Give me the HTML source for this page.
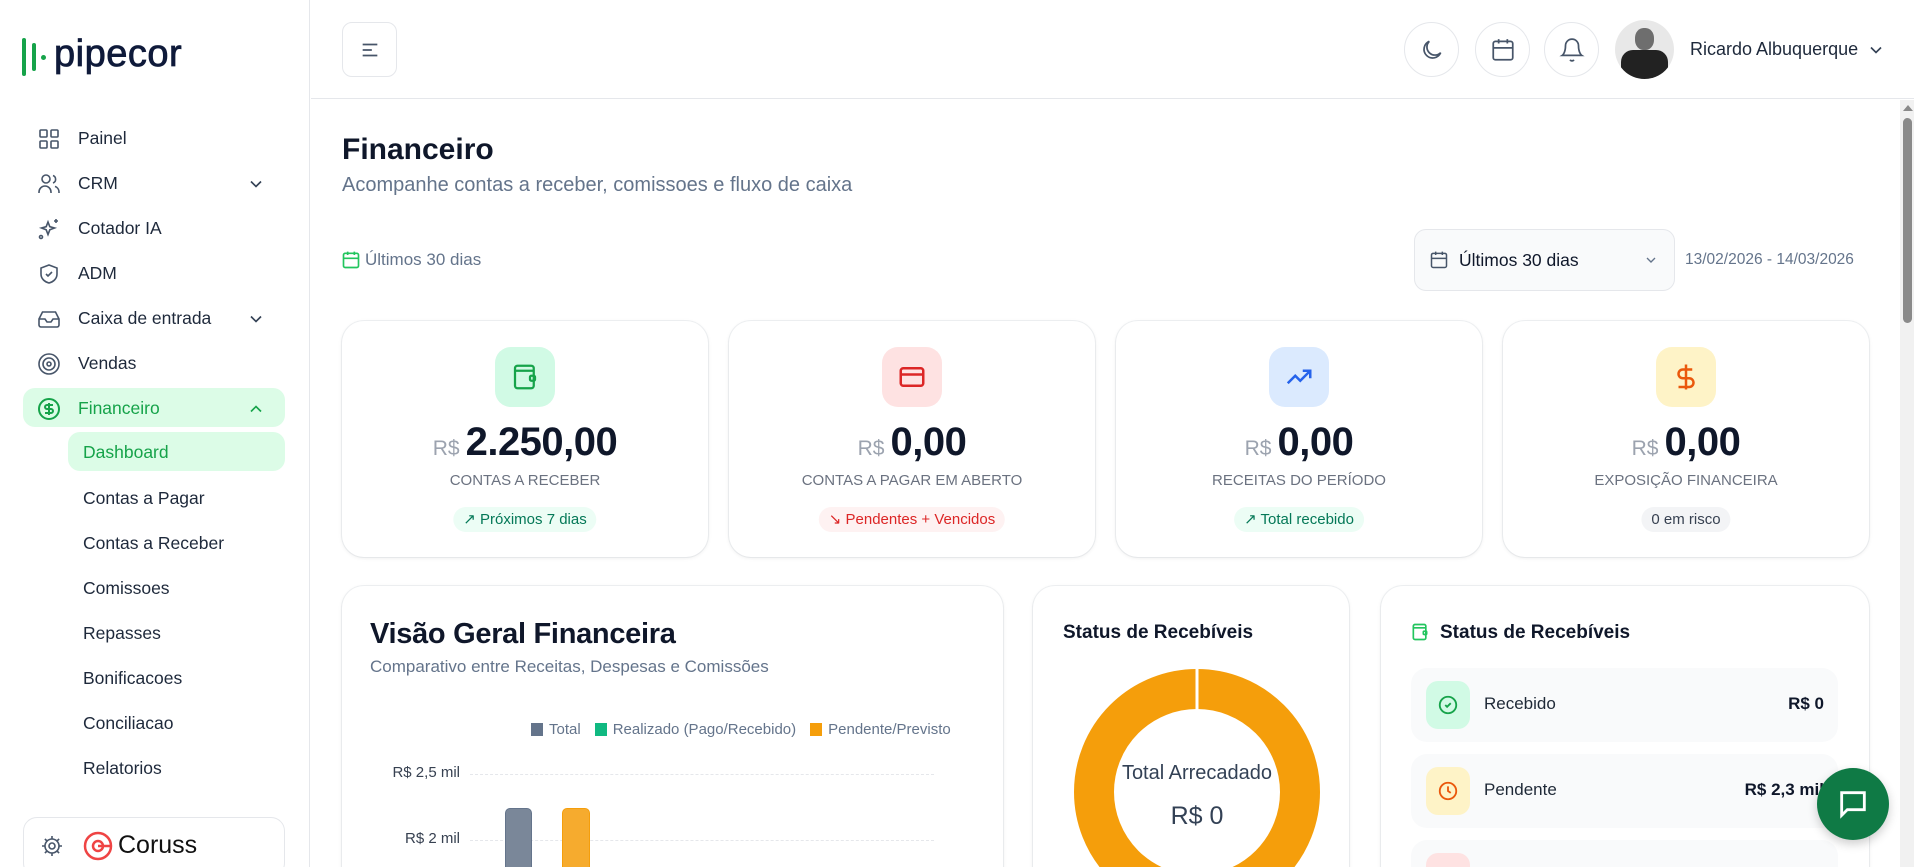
<!DOCTYPE html>
<html><head><meta charset="utf-8"><style>
*{box-sizing:border-box;margin:0;padding:0}
html,body{width:1914px;height:867px;overflow:hidden}
body{background:#fff;font-family:"Liberation Sans",sans-serif;color:#1e293b}
#w{position:relative;width:1914px;height:867px;overflow:hidden}
.a{position:absolute}
.side{left:0;top:0;width:310px;height:867px;border-right:1px solid #e5e7eb;background:#fff}
.nav{position:absolute;left:0;width:310px;height:45px;display:flex;align-items:center;font-size:17.5px;color:#1e293b}
.nav svg{position:absolute;left:37px}
.nav span{position:absolute;left:78px}
.nav .chev{left:246px}
.sub{position:absolute;left:83px;font-size:17.5px;color:#1e293b}
.hdr{left:311px;top:0;width:1603px;height:99px;border-bottom:1px solid #e5e7eb;background:#fff}
.circ{position:absolute;top:22px;width:55px;height:55px;border:1px solid #e5e7eb;border-radius:50%;display:flex;align-items:center;justify-content:center}
.card{position:absolute;background:#fff;border-radius:22px;box-shadow:0 1px 4px rgba(0,0,0,.08),0 0 0 1px #f1f3f5}
.kpi{top:321px;width:366px;height:236px;text-align:center}
.ib{position:absolute;left:153px;top:26px;width:60px;height:60px;border-radius:16px;display:flex;align-items:center;justify-content:center}
.val{position:absolute;left:0;right:0;top:99px;font-size:40px;font-weight:bold;color:#0f172a;letter-spacing:-.5px}
.val small{font-size:21px;font-weight:normal;color:#9ca3af;margin-right:6px;letter-spacing:0}
.lbl{position:absolute;left:0;right:0;top:151px;font-size:15px;color:#6b7280}
.bdg{position:absolute;top:186px;left:50%;transform:translateX(-50%);height:25px;line-height:25px;padding:0 10px;border-radius:13px;font-size:15px;white-space:nowrap}
.item{position:absolute;left:30px;width:427px;height:74px;background:#f9fafb;border-radius:16px}
.item .ic{position:absolute;left:15px;top:13px;width:44px;height:48px;border-radius:12px;display:flex;align-items:center;justify-content:center}
.item .t{position:absolute;left:73px;top:26px;font-size:17px;color:#1f2937}
.item .v{position:absolute;right:14px;top:26px;font-size:17px;font-weight:bold;color:#0f172a}
</style></head><body><div id="w">

<div class="a side">
  <div class="a" style="left:22px;top:38px;display:flex;align-items:center">
    <div style="width:4px;height:38px;background:#16a34a;border-radius:2px"></div>
    <div style="width:4px;height:28px;background:#16a34a;border-radius:2px;margin-left:6px"></div>
    <div style="width:5px;height:5px;background:#16a34a;border-radius:50%;margin-left:5px"></div>
    <div style="font-size:38px;color:#0f1a3a;margin-left:8px;margin-top:-6px;letter-spacing:.5px;-webkit-text-stroke:.8px #0f1a3a">pipecor</div>
  </div>
  <div class="nav" style="top:116px"><svg width="24" height="24" viewBox="0 0 24 24" fill="none" stroke="#475569" stroke-width="1.6"><rect x="3" y="3" width="7" height="7" rx="1"/><rect x="14" y="3" width="7" height="7" rx="1"/><rect x="3" y="14" width="7" height="7" rx="1"/><rect x="14" y="14" width="7" height="7" rx="1"/></svg><span>Painel</span></div>
  <div class="nav" style="top:161px"><svg width="24" height="24" viewBox="0 0 24 24" fill="none" stroke="#475569" stroke-width="1.6"><circle cx="9" cy="7" r="4"/><path d="M2 21v-1a6 6 0 0 1 12 0v1M16 3.5a4 4 0 0 1 0 7.5M22 21v-1a6 6 0 0 0-4-5.6"/></svg><span>CRM</span><svg class="chev" style="left:246px" width="20" height="20" viewBox="0 0 24 24" fill="none" stroke="#334155" stroke-width="2"><path d="M6 9l6 6 6-6"/></svg></div>
  <div class="nav" style="top:206px"><svg width="24" height="24" viewBox="0 0 24 24" fill="none" stroke="#475569" stroke-width="1.6"><path d="M11 5l1.8 4.7L17.5 11l-4.7 1.8L11 17.5l-1.8-4.7L4.5 11l4.7-1.3z"/><path d="M19 2v4M17 4h4"/><circle cx="4" cy="20" r="1.5"/></svg><span>Cotador IA</span></div>
  <div class="nav" style="top:251px"><svg width="24" height="24" viewBox="0 0 24 24" fill="none" stroke="#475569" stroke-width="1.6"><path d="M12 3l8 3v6c0 5-4 8-8 9-4-1-8-4-8-9V6z"/><path d="M9 12l2 2 4-4"/></svg><span>ADM</span></div>
  <div class="nav" style="top:296px"><svg width="24" height="24" viewBox="0 0 24 24" fill="none" stroke="#475569" stroke-width="1.6"><path d="M2 12h6l2 3h4l2-3h6M5.5 5h13L22 12v6a2 2 0 0 1-2 2H4a2 2 0 0 1-2-2v-6z"/></svg><span>Caixa de entrada</span><svg class="chev" style="left:246px" width="20" height="20" viewBox="0 0 24 24" fill="none" stroke="#334155" stroke-width="2"><path d="M6 9l6 6 6-6"/></svg></div>
  <div class="nav" style="top:341px"><svg width="24" height="24" viewBox="0 0 24 24" fill="none" stroke="#475569" stroke-width="1.6"><circle cx="12" cy="12" r="10"/><circle cx="12" cy="12" r="6"/><circle cx="12" cy="12" r="2"/></svg><span>Vendas</span></div>
  <div class="a" style="left:23px;top:388px;width:262px;height:39px;background:#dcfce7;border-radius:12px"></div>
  <div class="nav" style="top:386px;color:#16a34a"><svg width="24" height="24" viewBox="0 0 24 24" fill="none" stroke="#16a34a" stroke-width="2"><circle cx="12" cy="12" r="10"/><path d="M16 8h-6a2 2 0 0 0 0 4h4a2 2 0 0 1 0 4H8M12 6v12"/></svg><span>Financeiro</span><svg class="chev" style="left:246px" width="20" height="20" viewBox="0 0 24 24" fill="none" stroke="#16a34a" stroke-width="2"><path d="M6 15l6-6 6 6"/></svg></div>
  <div class="a" style="left:68px;top:432px;width:217px;height:39px;background:#dcfce7;border-radius:12px"></div>
  <div class="sub" style="top:442px;color:#16a34a">Dashboard</div>
  <div class="sub" style="top:488px">Contas a Pagar</div>
  <div class="sub" style="top:533px">Contas a Receber</div>
  <div class="sub" style="top:578px">Comissoes</div>
  <div class="sub" style="top:623px">Repasses</div>
  <div class="sub" style="top:668px">Bonificacoes</div>
  <div class="sub" style="top:713px">Conciliacao</div>
  <div class="sub" style="top:758px">Relatorios</div>
  <div class="a" style="left:23px;top:817px;width:262px;height:60px;border:1px solid #e5e7eb;border-radius:14px">
    <svg class="a" style="left:16px;top:16px" width="24" height="24" viewBox="0 0 24 24" fill="none" stroke="#475569" stroke-width="1.6"><circle cx="12" cy="12" r="3"/><path d="M12 2v3M12 19v3M2 12h3M19 12h3M4.9 4.9l2.1 2.1M17 17l2.1 2.1M4.9 19.1L7 17M17 7l2.1-2.1"/><circle cx="12" cy="12" r="7"/></svg>
    <svg class="a" style="left:58px;top:12px" width="32" height="32" viewBox="0 0 32 32" fill="none" stroke="#ef4444" stroke-width="2.5"><circle cx="16" cy="16" r="13"/><circle cx="16" cy="16" r="5"/><path d="M16 16h13"/></svg>
    <div class="a" style="left:94px;top:13px;font-size:25px;color:#111">Coruss</div>
  </div>
</div>

<div class="a hdr">
  <div class="a" style="left:31px;top:22px;width:55px;height:55px;border:1px solid #e5e7eb;border-radius:10px;display:flex;align-items:center;justify-content:center"><svg width="22" height="22" viewBox="0 0 24 24" fill="none" stroke="#475569" stroke-width="1.8"><path d="M4 6h16M4 12h10M4 18h16"/></svg></div>
  <div class="circ" style="left:1093px"><svg width="26" height="26" viewBox="0 0 24 24" fill="none" stroke="#475569" stroke-width="1.6"><path d="M20 14.5A8 8 0 1 1 9.5 4a6.5 6.5 0 0 0 10.5 10.5z"/></svg></div>
  <div class="circ" style="left:1164px"><svg width="26" height="26" viewBox="0 0 24 24" fill="none" stroke="#475569" stroke-width="1.6"><rect x="3" y="4" width="18" height="17" rx="2"/><path d="M3 10h18M8 2v4M16 2v4"/></svg></div>
  <div class="circ" style="left:1233px"><svg width="26" height="26" viewBox="0 0 24 24" fill="none" stroke="#475569" stroke-width="1.6"><path d="M6 8a6 6 0 0 1 12 0c0 7 3 9 3 9H3s3-2 3-9M10.3 21a1.9 1.9 0 0 0 3.4 0"/></svg></div>
  <div class="a" style="left:1304px;top:20px;width:59px;height:59px;border-radius:50%;background:#e8e8e8;overflow:hidden"><div class="a" style="left:20px;top:8px;width:19px;height:22px;border-radius:45%;background:#6e6e6e"></div><div class="a" style="left:6px;top:30px;width:47px;height:30px;border-radius:12px 12px 0 0;background:#222"></div></div>
  <div class="a" style="left:1379px;top:39px;font-size:18px;color:#1e293b">Ricardo Albuquerque</div>
  <svg class="a" style="left:1555px;top:40px" width="20" height="20" viewBox="0 0 24 24" fill="none" stroke="#334155" stroke-width="2"><path d="M6 9l6 6 6-6"/></svg>
</div>

<div class="a" style="left:1900px;top:100px;width:14px;height:767px;background:#f1f1f1"></div>
<div class="a" style="left:1903px;top:105px;width:0;height:0;border-left:5px solid transparent;border-right:5px solid transparent;border-bottom:6px solid #8a8a8a"></div>
<div class="a" style="left:1903px;top:118px;width:9px;height:205px;background:#8a8a8a;border-radius:5px"></div>

<div class="a" style="left:342px;top:133px;font-size:30px;font-weight:bold;color:#0f172a">Financeiro</div>
<div class="a" style="left:342px;top:174px;font-size:20px;color:#64748b">Acompanhe contas a receber, comissoes e fluxo de caixa</div>
<svg class="a" style="left:341px;top:250px" width="20" height="20" viewBox="0 0 24 24" fill="none" stroke="#22c55e" stroke-width="2"><rect x="3" y="4" width="18" height="17" rx="2"/><path d="M3 10h18M8 2v4M16 2v4"/></svg>
<div class="a" style="left:365px;top:250px;font-size:17px;color:#64748b">Últimos 30 dias</div>

<div class="a" style="left:1414px;top:229px;width:261px;height:62px;background:#f9fafb;border:1px solid #e5e7eb;border-radius:12px">
  <svg class="a" style="left:14px;top:20px" width="20" height="20" viewBox="0 0 24 24" fill="none" stroke="#475569" stroke-width="1.8"><rect x="3" y="4" width="18" height="17" rx="2"/><path d="M3 10h18M8 2v4M16 2v4"/></svg>
  <div class="a" style="left:44px;top:20px;font-size:17.5px;color:#0f172a">Últimos 30 dias</div>
  <svg class="a" style="left:228px;top:22px" width="16" height="16" viewBox="0 0 24 24" fill="none" stroke="#64748b" stroke-width="2"><path d="M6 9l6 6 6-6"/></svg>
</div>
<div class="a" style="left:1685px;top:251px;font-size:15.5px;color:#64748b">13/02/2026 - 14/03/2026</div>

<div class="card kpi" style="left:342px">
  <div class="ib" style="background:#d1fae5"><svg width="30" height="30" viewBox="0 0 24 24" fill="none" stroke="#16a34a" stroke-width="1.8"><rect x="4" y="3" width="15" height="18" rx="2"/><path d="M4 7h15"/><rect x="16" y="11" width="4" height="4" rx="1"/></svg></div>
  <div class="val"><small>R$</small>2.250,00</div>
  <div class="lbl">CONTAS A RECEBER</div>
  <div class="bdg" style="background:#ecfdf5;color:#047857">↗ Próximos 7 dias</div>
</div>
<div class="card kpi" style="left:729px">
  <div class="ib" style="background:#fee2e2"><svg width="30" height="30" viewBox="0 0 24 24" fill="none" stroke="#dc2626" stroke-width="2"><rect x="3" y="5" width="18" height="14" rx="2"/><path d="M3 10h18"/></svg></div>
  <div class="val"><small>R$</small>0,00</div>
  <div class="lbl">CONTAS A PAGAR EM ABERTO</div>
  <div class="bdg" style="background:#fef2f2;color:#dc2626">↘ Pendentes + Vencidos</div>
</div>
<div class="card kpi" style="left:1116px">
  <div class="ib" style="background:#dbeafe"><svg width="30" height="30" viewBox="0 0 24 24" fill="none" stroke="#2563eb" stroke-width="2"><path d="M3 17l6-6 4 4 8-8M15 7h6v6"/></svg></div>
  <div class="val"><small>R$</small>0,00</div>
  <div class="lbl">RECEITAS DO PERÍODO</div>
  <div class="bdg" style="background:#ecfdf5;color:#047857">↗ Total recebido</div>
</div>
<div class="card kpi" style="left:1503px">
  <div class="ib" style="background:#fef3c7"><svg width="30" height="30" viewBox="0 0 24 24" fill="none" stroke="#ea580c" stroke-width="2"><path d="M12 2v20M17 6H9.5a3.5 3.5 0 0 0 0 7h5a3.5 3.5 0 0 1 0 7H6"/></svg></div>
  <div class="val"><small>R$</small>0,00</div>
  <div class="lbl">EXPOSIÇÃO FINANCEIRA</div>
  <div class="bdg" style="background:#f3f4f6;color:#374151">0 em risco</div>
</div>

<div class="card" style="left:342px;top:586px;width:661px;height:320px">
  <div class="a" style="left:28px;top:32px;font-size:29px;font-weight:bold;color:#0f172a;letter-spacing:-.3px">Visão Geral Financeira</div>
  <div class="a" style="left:28px;top:71px;font-size:17px;color:#64748b">Comparativo entre Receitas, Despesas e Comissões</div>
  <div class="a" style="left:189px;top:135px;font-size:15px;color:#64748b;display:flex;align-items:center;white-space:nowrap">
    <span style="width:12px;height:13px;background:#64748b;margin-right:6px"></span>Total
    <span style="width:12px;height:13px;background:#10b981;margin:0 6px 0 14px"></span>Realizado (Pago/Recebido)
    <span style="width:12px;height:13px;background:#f59e0b;margin:0 6px 0 14px"></span>Pendente/Previsto
  </div>
  <div class="a" style="left:20px;top:178px;width:98px;text-align:right;font-size:15px;color:#374151">R$ 2,5 mil</div>
  <div class="a" style="left:128px;top:188px;width:464px;border-top:1px dashed #e5e7eb"></div>
  <div class="a" style="left:20px;top:244px;width:98px;text-align:right;font-size:15px;color:#374151">R$ 2 mil</div>
  <div class="a" style="left:128px;top:254px;width:464px;border-top:1px dashed #e5e7eb"></div>
  <div class="a" style="left:163px;top:222px;width:27px;height:100px;background:#7a8799;border:1px solid #64748b;border-radius:5px 5px 0 0"></div>
  <div class="a" style="left:220px;top:222px;width:28px;height:100px;background:#f6ab2e;border:1px solid #f59e0b;border-radius:5px 5px 0 0"></div>
</div>

<div class="card" style="left:1033px;top:586px;width:316px;height:320px;overflow:hidden">
  <div class="a" style="left:30px;top:36px;font-size:19px;font-weight:bold;color:#0f172a">Status de Recebíveis</div>
  <svg class="a" style="left:41px;top:83px" width="246" height="246" viewBox="0 0 246 246"><circle cx="123" cy="123" r="103" fill="none" stroke="#f59e0b" stroke-width="40"/><path d="M123 0v42" stroke="#fff" stroke-width="3"/></svg>
  <div class="a" style="left:0;width:328px;top:176px;text-align:center;font-size:20px;color:#334155">Total Arrecadado</div>
  <div class="a" style="left:0;width:328px;top:216px;text-align:center;font-size:25px;color:#334155">R$ 0</div>
</div>

<div class="card" style="left:1381px;top:586px;width:488px;height:320px">
  <svg class="a" style="left:29px;top:36px" width="20" height="20" viewBox="0 0 24 24" fill="none" stroke="#22c55e" stroke-width="2"><rect x="4" y="3" width="15" height="18" rx="2"/><path d="M4 7h15"/><rect x="16" y="11" width="4" height="4" rx="1"/></svg>
  <div class="a" style="left:59px;top:36px;font-size:19px;font-weight:bold;color:#0f172a">Status de Recebíveis</div>
  <div class="item" style="top:82px"><div class="ic" style="background:#d1fae5"><svg width="22" height="22" viewBox="0 0 24 24" fill="none" stroke="#16a34a" stroke-width="2"><circle cx="12" cy="12" r="9"/><path d="M9 12l2 2 4-4"/></svg></div><div class="t">Recebido</div><div class="v">R$ 0</div></div>
  <div class="item" style="top:168px"><div class="ic" style="background:#fef3c7"><svg width="22" height="22" viewBox="0 0 24 24" fill="none" stroke="#ea580c" stroke-width="2"><circle cx="12" cy="12" r="9"/><path d="M12 7v5l3 2"/></svg></div><div class="t">Pendente</div><div class="v">R$ 2,3 mil</div></div>
  <div class="item" style="top:254px"><div class="ic" style="background:#fee2e2"></div></div>
</div>

<div class="a" style="left:1817px;top:768px;width:72px;height:72px;border-radius:50%;background:#0f7a45;box-shadow:0 4px 10px rgba(0,0,0,.2);display:flex;align-items:center;justify-content:center"><svg width="34" height="34" viewBox="0 0 24 24" fill="none" stroke="#fff" stroke-width="2"><path d="M4 4h16v12H8l-4 4z"/></svg></div>
</div></body></html>
